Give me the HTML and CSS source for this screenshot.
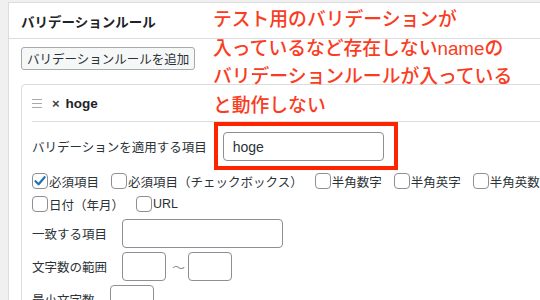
FILE: index.html
```html
<!DOCTYPE html>
<html lang="ja">
<head>
<meta charset="utf-8">
<link rel="stylesheet" href="styles.css">
</head>
<body>
<div class="page">
  <section class="panel">
    <header class="panel-header">バリデーションルール</header>
    <div class="panel-body">
      <button class="btn">バリデーションルールを追加</button>
      <div class="rule">
        <div class="rule-head">
          <svg class="handle" width="10" height="9" viewBox="0 0 10 9"><path d="M0 0.5H10M0 4.5H10M0 8.5H10" stroke="#a7aaad" stroke-width="1.2"/></svg>
          <span class="remove">×</span>
          <span class="rule-name">hoge</span>
        </div>
        <div class="field field-first">
          <span class="label">バリデーションを適用する項目</span>
          <span class="input input-wide"><span class="val">hoge</span></span>
        </div>
        <div class="checks checks-first">
          <label class="check"><span class="box checked"><svg width="14" height="14" viewBox="0 0 14 14"><path d="M2.5 7.2L5.6 10.3L11.6 3.2" fill="none" stroke="#2271b1" stroke-width="2.2" stroke-linecap="round" stroke-linejoin="round"/></svg></span>必須項目</label>
          <label class="check"><span class="box"></span>必須項目（チェックボックス）</label>
          <label class="check"><span class="box"></span>半角数字</label>
          <label class="check"><span class="box"></span>半角英字</label>
          <label class="check"><span class="box"></span>半角英数</label>
        </div>
        <div class="checks">
          <label class="check"><span class="box"></span>日付（年月）</label>
          <label class="check"><span class="box"></span>URL</label>
        </div>
        <div class="field field-match">
          <span class="label">一致する項目</span>
          <span class="input input-match"></span>
        </div>
        <div class="field">
          <span class="label">文字数の範囲</span>
          <span class="input input-small"></span>
          <span class="tilde">〜</span>
          <span class="input input-small"></span>
        </div>
        <div class="field">
          <span class="label">最小文字数</span>
          <span class="input input-small"></span>
        </div>
      </div>
    </div>
  </section>
  <div class="note">テスト用のバリデーションが<br>入っているなど存在しないnameの<br>バリデーションルールが入っている<br>と動作しない</div>
  <div class="highlight"></div>
</div>
</body>
</html>
```
FILE: styles.css
```css
* { box-sizing: border-box; }
html, body {
  margin: 0;
  padding: 0;
  width: 540px;
  height: 300px;
  overflow: hidden;
  background: #f0f0f1;
  font-family: "Liberation Sans", "Noto Sans CJK JP", sans-serif;
}
.page {
  position: relative;
  width: 540px;
  height: 300px;
  padding: 2px 0 0 8px;
}
.panel {
  width: 700px;
  height: 400px;
  background: #fff;
  border: 1px solid #dcdcde;
}
.panel-header {
  height: 36px;
  padding: 0 12px;
  display: flex;
  align-items: center;
  font-size: 13.5px;
  font-weight: bold;
  color: #1d2327;
  border-bottom: 1px solid #dcdcde;
}
.panel-body {
  padding: 8px 12px 0;
}
.btn {
  display: block;
  height: 23px;
  margin: 0;
  padding: 0 5px;
  font-family: inherit;
  font-size: 12.5px;
  color: #2c3338;
  background: #f6f7f7;
  border: 1px solid #a7aaad;
  border-radius: 3px;
}
.rule {
  margin-top: 14px;
  border: 1px solid #dcdcde;
  border-radius: 4px;
  padding: 0 10px 40px;
}
.rule-head {
  height: 37px;
  display: flex;
  align-items: center;
  border-bottom: 1px solid #dcdcde;
}
.handle { margin-right: 10px; margin-top: 1px; }
.remove {
  font-size: 13px;
  font-weight: bold;
  color: #3c434a;
  margin-right: 6px;
}
.rule-name {
  font-size: 13.5px;
  font-weight: bold;
  color: #1d2327;
}
.field {
  display: flex;
  align-items: center;
  height: 29px;
  margin-top: 4px;
}
.field-first { margin-top: 10px; }
.field-match { margin-top: 7px; }
.label {
  font-size: 12.5px;
  color: #2c3338;
  margin-right: 15px;
  white-space: nowrap;
}
.field-first .label { margin-right: 16px; }
.input {
  display: flex;
  align-items: center;
  height: 29px;
  border: 1px solid #8c8f94;
  border-radius: 4px;
  background: #fff;
  flex: none;
}
.input-wide { width: 161px; padding-left: 9px; }
.input-match { width: 161px; }
.input-small { width: 44px; }
.val { font-size: 14px; color: #2c3338; }
.tilde {
  font-size: 13px;
  color: #8c8f94;
  margin: 0 3px 0 6px;
}
.checks {
  display: flex;
  white-space: nowrap;
  height: 16px;
  margin-top: 7px;
}
.checks-first { margin-top: 12px; }
.check {
  display: flex;
  align-items: center;
  font-size: 12.5px;
  color: #2c3338;
  margin-right: 12px;
}
.box {
  width: 16px;
  height: 16px;
  border: 1px solid #8c8f94;
  border-radius: 4px;
  margin-right: 1px;
  display: flex;
  align-items: center;
  justify-content: center;
  flex: none;
}
.note {
  position: absolute;
  left: 213px;
  top: 6px;
  font-size: 18.8px;
  font-weight: 500;
  line-height: 28.7px;
  color: #fa3c1f;
  white-space: nowrap;
}
.highlight {
  position: absolute;
  left: 214px;
  top: 122px;
  width: 184px;
  height: 48px;
  border: 4px solid #ff2400;
}
```
